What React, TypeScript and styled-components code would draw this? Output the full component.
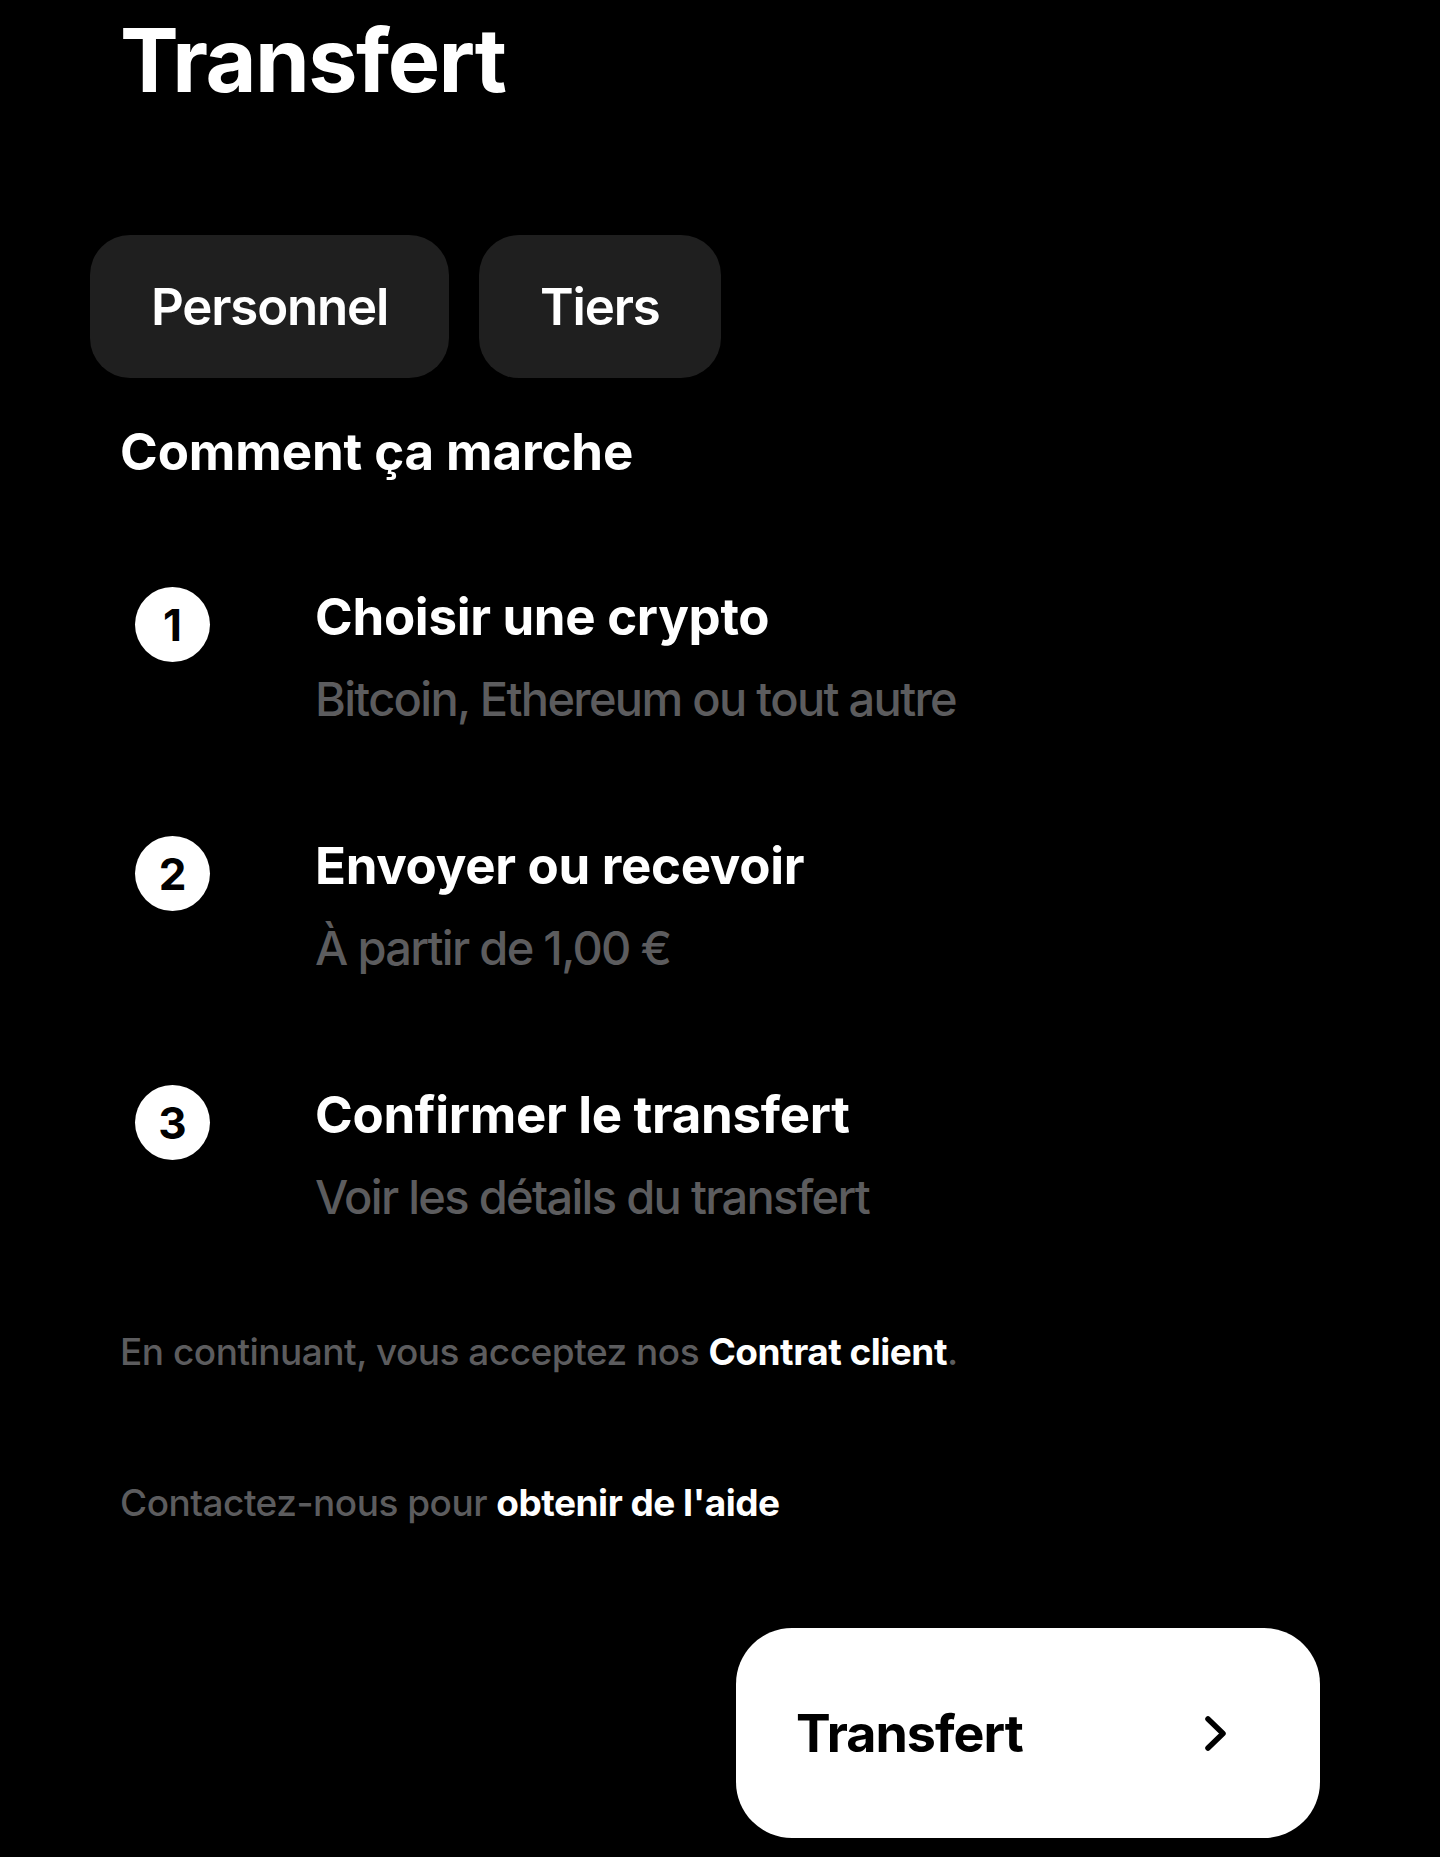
import React from "react";
import styled, { createGlobalStyle } from "styled-components";

const GlobalStyle = createGlobalStyle`
  html, body {
    margin: 0;
    padding: 0;
    background: #000;
  }
  body {
    font-family: Inter, "Noto Sans", "Liberation Sans", sans-serif;
    color: #fff;
    -webkit-font-smoothing: antialiased;
  }
`;

type StepData = {
  title: string;
  text: string;
};

const steps: StepData[] = [
  { title: "Choisir une crypto", text: "Bitcoin, Ethereum ou tout autre" },
  { title: "Envoyer ou recevoir", text: "À partir de 1,00 €" },
  { title: "Confirmer le transfert", text: "Voir les détails du transfert" },
];

function Chevron() {
  return (
    <svg width="24" height="37" viewBox="0 0 24 37" fill="none">
      <path
        d="M4 4 L19 18.5 L4 33"
        stroke="#000"
        strokeWidth="5.5"
        strokeLinecap="round"
        strokeLinejoin="round"
      />
    </svg>
  );
}

function App() {
  return (
    <>
      <GlobalStyle />
      <Page>
        <Title>Transfert</Title>

        <TabRow>
          <Tab>Personnel</Tab>
          <Tab>Tiers</Tab>
        </TabRow>

        <SectionTitle>Comment ça marche</SectionTitle>

        <StepList>
          {steps.map((step, i) => (
            <Step key={step.title}>
              <StepNumber>{i + 1}</StepNumber>
              <StepBody>
                <StepTitle>{step.title}</StepTitle>
                <StepText>{step.text}</StepText>
              </StepBody>
            </Step>
          ))}
        </StepList>

        <Legal>
          En continuant, vous acceptez nos <Strong>Contrat client</Strong>.
        </Legal>
        <Help>
          Contactez-nous pour <Strong>obtenir de l'aide</Strong>
        </Help>

        <CtaButton>
          <CtaLabel>Transfert</CtaLabel>
          <Chevron />
        </CtaButton>
      </Page>
    </>
  );
}

const Page = styled.main`
  box-sizing: border-box;
  min-height: 1857px;
  padding: 16px 120px 19px 120px;
  display: flex;
  flex-direction: column;
`;

const Title = styled.h1`
  margin: 0;
  font-size: 88px;
  line-height: 88px;
  font-weight: 700;
  letter-spacing: -1.5px;
`;

const TabRow = styled.div`
  display: flex;
  gap: 30px;
  margin: 131px 0 0 -30px;
`;

const Tab = styled.button`
  height: 143px;
  padding: 0 61px;
  border: none;
  border-radius: 40px;
  background: #1f1f1f;
  color: #fff;
  font-family: inherit;
  font-size: 51px;
  font-weight: 600;
  letter-spacing: -1.2px;
  cursor: pointer;
`;

const SectionTitle = styled.h2`
  margin: 48px 0 0;
  font-size: 51px;
  line-height: 51px;
  font-weight: 700;
  letter-spacing: -0.1px;
`;

const StepList = styled.ol`
  list-style: none;
  margin: 110px 0 0;
  padding: 0 0 0 15px;
  display: flex;
  flex-direction: column;
  gap: 114px;
`;

const Step = styled.li`
  display: grid;
  grid-template-columns: 75px 1fr;
  column-gap: 105px;
  align-items: start;
`;

const StepNumber = styled.span`
  width: 75px;
  height: 75px;
  border-radius: 50%;
  background: #fff;
  color: #000;
  display: flex;
  align-items: center;
  justify-content: center;
  font-size: 44px;
  font-weight: 700;
  line-height: 1;
`;

const StepBody = styled.div`
  display: flex;
  flex-direction: column;
  padding-top: 4px;
`;

const StepTitle = styled.h3`
  margin: 0;
  font-size: 51px;
  line-height: 51px;
  font-weight: 700;
  letter-spacing: -0.3px;
`;

const StepText = styled.p`
  margin: 33px 0 0;
  font-size: 47px;
  line-height: 47px;
  font-weight: 500;
  color: #5c5c5e;
  letter-spacing: -1.7px;
`;

const Legal = styled.p`
  margin: 113px 0 0;
  font-size: 37px;
  line-height: 37px;
  font-weight: 500;
  color: #5c5c5e;
  letter-spacing: -0.5px;
`;

const Help = styled(Legal)`
  margin-top: 114px;
`;

const Strong = styled.strong`
  color: #fff;
  font-weight: 700;
`;

const CtaButton = styled.button`
  align-self: flex-end;
  margin-top: 107px;
  box-sizing: border-box;
  width: 584px;
  height: 210px;
  padding: 0 92px 0 60px;
  border: none;
  border-radius: 56px;
  background: #fff;
  color: #000;
  display: flex;
  align-items: center;
  justify-content: space-between;
  font-family: inherit;
  cursor: pointer;
`;

const CtaLabel = styled.span`
  font-size: 52px;
  font-weight: 700;
  letter-spacing: -1px;
`;

export default App;
